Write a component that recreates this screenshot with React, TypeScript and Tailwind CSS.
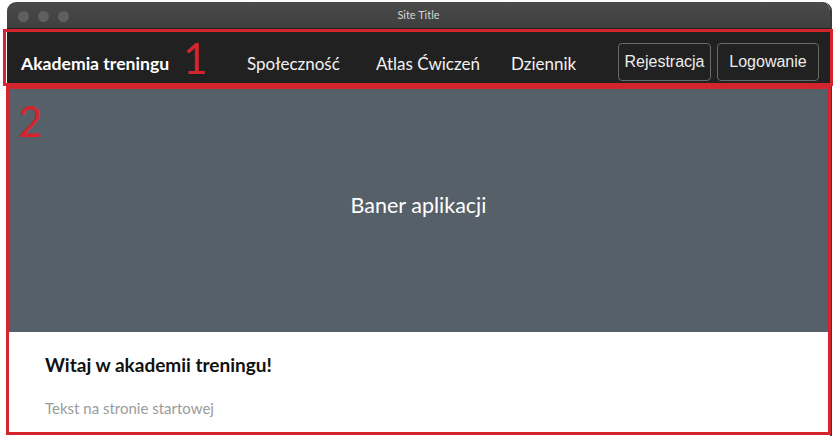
import React from "react"

const sans = { fontFamily: "'Source Sans Pro', Lato, 'Noto Sans', sans-serif" }

const links = [
  { label: "Społeczność", w: "w-[129px]" },
  { label: "Atlas Ćwiczeń", w: "w-[135px]" },
  { label: "Dziennik", w: "" },
]

export default function App() {
  return (
    <div className="relative w-[833px] h-[436px] bg-white overflow-hidden" style={sans}>
      {/* window */}
      <div className="ml-[7px] mt-[2px] w-[825px] h-[434px] rounded-t-[9px] overflow-hidden flex flex-col bg-white border-r-2 border-[#3b3b3b]">
        {/* title bar */}
        <div className="relative h-[26px] shrink-0 bg-gradient-to-b from-[#4a4a4a] to-[#3f3f3f] flex items-center justify-center">
          <div className="absolute left-[11px] top-[9px] flex gap-[9px]">
            <span className="w-[11px] h-[11px] rounded-full bg-[#5f5f5f]" />
            <span className="w-[11px] h-[11px] rounded-full bg-[#5f5f5f]" />
            <span className="w-[11px] h-[11px] rounded-full bg-[#5f5f5f]" />
          </div>
          <span className="text-[11px] text-[#d6d6d6] pt-[1px]">Site Title</span>
        </div>

        {/* navbar */}
        <nav className="h-[59px] shrink-0 bg-[#212121] flex items-start pt-[15px] pl-[14px] pr-[11px]">
          <div className="w-[226px] h-[38px] flex items-center pt-[4px] text-[17.6px] font-bold text-white">
            Akademia treningu
          </div>
          <div className="h-[38px] flex items-center pt-[4px] text-[17px] text-[#f2f2f2]">
            {links.map((l) => (
              <a key={l.label} href="#" className={l.w}>{l.label}</a>
            ))}
          </div>
          <div className="ml-auto flex gap-[6px]" style={{ fontFamily: "'Liberation Sans', Arial, sans-serif" }}>
            <button className="w-[93px] h-[38px] rounded-[4px] border border-[#6a6a6a] text-[16px] text-[#ececec]">Rejestracja</button>
            <button className="w-[102px] h-[38px] rounded-[4px] border border-[#6a6a6a] text-[16px] text-[#ececec]">Logowanie</button>
          </div>
        </nav>

        {/* banner */}
        <section className="h-[245px] shrink-0 bg-[#566069] flex items-center justify-center">
          <span className="text-[21.5px] text-white pb-[9px]">Baner aplikacji</span>
        </section>

        {/* content */}
        <section className="flex-1 pl-[38px] pt-[21px]">
          <h1 className="text-[19px] font-bold text-[#111] leading-[24px]">Witaj w akademii treningu!</h1>
          <p className="mt-[20px] text-[15px] text-[#9b9b9b]">Tekst na stronie startowej</p>
        </section>
      </div>

      {/* annotations */}
      <div className="absolute left-[3px] top-[29px] w-[830px] h-[57px] border-[3px] border-[#d4252e] pointer-events-none" />
      <div className="absolute left-[6px] top-[86px] w-[825px] h-[349px] border-[3px] border-[#d4252e] pointer-events-none" />
      <span className="absolute left-[183px] top-[30px] text-[42px] leading-[56px] text-[#d4252e]">1</span>
      <span className="absolute left-[18px] top-[93px] text-[42px] leading-[56px] text-[#d4252e]">2</span>
    </div>
  )
}
